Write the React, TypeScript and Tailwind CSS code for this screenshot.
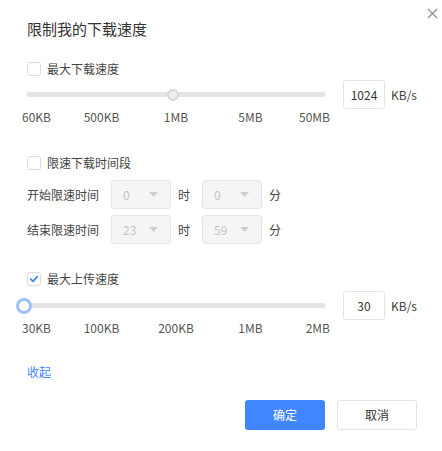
import React from 'react';

const font = { fontFamily: '"Noto Sans CJK SC", "Noto Sans", sans-serif' };

const Checkbox: React.FC<{ checked?: boolean; label: string }> = ({ checked, label }) => (
  <div className="flex items-center h-[14px]">
    <span className="w-[14px] h-[14px] rounded-[3px] border border-[#dcdcdc] bg-white flex items-center justify-center">
      {checked && (
        <svg width="10" height="10" viewBox="0 0 10 10">
          <path d="M1.8 5.2 L4 7.3 L8.3 2.6" fill="none" stroke="#3f86ff" strokeWidth="1.8" strokeLinecap="round" strokeLinejoin="round" />
        </svg>
      )}
    </span>
    <span className="ml-[6px] text-[12px] leading-[16px] text-[#444]">{label}</span>
  </div>
);

const SpeedSlider: React.FC<{ value: string; thumbLeft: number; active?: boolean; marks: string[] }> = ({ value, thumbLeft, active, marks }) => (
  <div>
    <div className="flex items-center h-[29px]">
      <div className="relative w-[298px] h-[5px] bg-[#e4e4e4]">
        {active ? (
          <span
            className="absolute top-1/2 -translate-y-1/2 w-[16px] h-[16px] rounded-full bg-white border-[3px] border-[#9ec0fa]"
            style={{ left: thumbLeft }}
          />
        ) : (
          <span
            className="absolute top-1/2 -translate-y-1/2 w-[12px] h-[12px] rounded-full bg-[#ececec] border-[2px] border-[#d6d6d6]"
            style={{ left: thumbLeft }}
          />
        )}
      </div>
      <div className="ml-[18px] w-[42px] h-[29px] rounded-[3px] border border-[#e3e3e3] flex items-center justify-center text-[12px] text-[#333]">
        {value}
      </div>
      <span className="ml-[6px] text-[12px] text-[#444]">KB/s</span>
    </div>
    <div className="relative w-[298px] h-[16px] text-[12px] leading-[16px] text-[#555] whitespace-nowrap">
      <span className="absolute left-[-5px]">{marks[0]}</span>
      <span className="absolute left-1/4 -translate-x-1/2">{marks[1]}</span>
      <span className="absolute left-1/2 -translate-x-1/2">{marks[2]}</span>
      <span className="absolute left-3/4 -translate-x-1/2">{marks[3]}</span>
      <span className="absolute right-[-5px]">{marks[4]}</span>
    </div>
  </div>
);

const Select: React.FC<{ value: string }> = ({ value }) => (
  <div className="w-[60px] h-[29px] rounded-[3px] border border-[#e6e6e6] bg-[#f5f5f5] flex items-center justify-between pl-[11px] pr-[12px]">
    <span className="text-[12px] text-[#c4c4c4]">{value}</span>
    <svg width="9" height="5" viewBox="0 0 9 5">
      <path d="M0 0 L9 0 L4.5 5 Z" fill="#cfcfcf" />
    </svg>
  </div>
);

const TimeRow: React.FC<{ label: string; h: string; m: string }> = ({ label, h, m }) => (
  <div className="flex items-center h-[29px] text-[12px] text-[#444]">
    <span className="w-[72px]">{label}</span>
    <div className="ml-[12px]"><Select value={h} /></div>
    <span className="ml-[7px]">时</span>
    <div className="ml-[12px]"><Select value={m} /></div>
    <span className="ml-[7px]">分</span>
  </div>
);

const App: React.FC = () => {
  return (
    <div className="relative w-[442px] h-[451px] bg-white pl-[27px]" style={font}>
      <button className="absolute top-[8px] right-[4px] w-[11px] h-[11px]">
        <svg width="11" height="11" viewBox="0 0 11 11">
          <path d="M1 1 L10 10 M10 1 L1 10" stroke="#8a8a8a" strokeWidth="1.1" />
        </svg>
      </button>

      <div className="pt-[19px] text-[15px] leading-[20px] text-[#333]">限制我的下载速度</div>

      <div className="mt-[23px]">
        <Checkbox label="最大下载速度" />
      </div>
      <div className="mt-[4px]">
        <SpeedSlider value="1024" thumbLeft={140} marks={['60KB', '500KB', '1MB', '5MB', '50MB']} />
      </div>

      <div className="mt-[31px]">
        <Checkbox label="限速下载时间段" />
      </div>
      <div className="mt-[10px]">
        <TimeRow label="开始限速时间" h="0" m="0" />
      </div>
      <div className="mt-[6px]">
        <TimeRow label="结束限速时间" h="23" m="59" />
      </div>

      <div className="mt-[28px]">
        <Checkbox checked label="最大上传速度" />
      </div>
      <div className="mt-[5px]">
        <SpeedSlider value="30" thumbLeft={-11} active marks={['30KB', '100KB', '200KB', '1MB', '2MB']} />
      </div>

      <div className="mt-[28px] text-[12px] leading-[16px] text-[#3f86ff]">收起</div>

      <div className="mt-[20px] flex justify-end gap-[12px] pr-[25px]">
        <button className="w-[80px] h-[30px] rounded-[3px] bg-[#3f86ff] text-white text-[12px]">确定</button>
        <button className="w-[80px] h-[30px] rounded-[3px] border border-[#e3e3e3] bg-white text-[#333] text-[12px]">取消</button>
      </div>
    </div>
  );
};

export default App;
